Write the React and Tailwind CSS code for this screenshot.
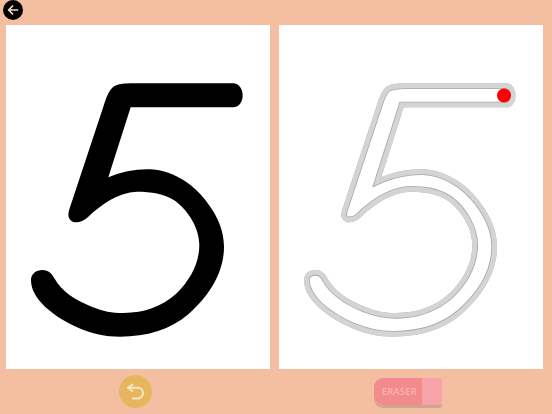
const FIVE = "M640 40 C657 40 668 58 668 76 C668 96 657 112 640 112 L332 112 L265 322 C305 305 345 297 390 298 C450 300 515 335 560 395 C595 440 612 485 612 530 C612 610 565 680 505 733 C450 780 380 800 300 800 C215 800 130 760 75 710 C50 685 33 660 33 630 C33 612 48 600 68 600 C85 600 97 612 103 625 C125 665 165 690 215 710 C250 724 275 729 310 729 C375 729 425 710 470 670 C515 625 538 575 538 525 C538 480 510 425 465 392 C430 370 395 365 350 365 C295 368 245 402 205 440 C190 455 175 458 160 456 C145 450 142 435 148 418 L250 110 C258 85 265 62 280 50 C295 42 310 40 340 40 Z";

function Digit() {
  return (
    <svg viewBox="0 0 264 344" className="block h-full w-full">
      <g transform="translate(14 45) scale(0.33333)">
        <path d={FIVE} fill="#000" />
      </g>
    </svg>
  );
}

function TraceDigit() {
  return (
    <svg viewBox="0 0 264 344" className="block h-full w-full">
      <defs>
        <clipPath id="five-clip">
          <path d={FIVE} />
        </clipPath>
      </defs>
      <g transform="translate(14 45) scale(0.33333)">
        <g clipPath="url(#five-clip)">
          <path d={FIVE} fill="#fff" stroke="#a8a8a8" strokeWidth="34" strokeLinejoin="miter" strokeMiterlimit="10" />
          <path d={FIVE} fill="none" stroke="#d4d4d4" strokeWidth="29" strokeLinejoin="miter" strokeMiterlimit="10" />
        </g>
      </g>
      <circle cx="225" cy="70.500" r="7" fill="#fe0000" />
    </svg>
  );
}

export default function App() {
  return (
    <div className="flex h-[414px] w-[552px] flex-col overflow-hidden bg-[#f4bfa1]">
      <div className="h-[25px] shrink-0 pl-[3px]">
        <button className="flex h-[20px] w-[20px] items-center justify-center rounded-full bg-black">
          <svg viewBox="0 0 16 16" className="h-[14px] w-[14px]" fill="none" stroke="#f6d9c6" strokeWidth="1.8">
            <path d="M14 8H3M8 3 3 8l5 5" />
          </svg>
        </button>
      </div>
      <div className="flex h-[344px] shrink-0 gap-[9px] px-[6px]">
        <div className="h-full w-[264px] bg-white"><Digit /></div>
        <div className="h-full w-[264px] bg-white"><TraceDigit /></div>
      </div>
      <div className="flex flex-1 gap-[9px] px-[6px]">
        <div className="flex w-[264px] items-start justify-center pr-[6px] pt-[6px]">
          <button className="flex h-[33px] w-[33px] items-center justify-center rounded-full bg-[#e8b55f]">
            <svg viewBox="0 0 20 20" className="h-[20px] w-[20px]" fill="none" stroke="#f3e6c5" strokeWidth="2">
              <path d="M8 2 3.200 5.800 8 9.500" />
              <path d="M3.500 5.800H13c3 0 5 2.400 5 5.200s-2 5.500-5 5.500H7" />
            </svg>
          </button>
        </div>
        <div className="flex w-[264px] items-start justify-center pr-[6px] pt-[9px]">
          <div className="flex h-[27px] w-[68px] overflow-hidden rounded-l-[9px] rounded-r-[3px] shadow-[0_3px_0_#cfa790]">
            <div className="flex w-[48px] items-center justify-center bg-[#f38b8d] pl-[3px] font-['Lato','Liberation_Sans',sans-serif] text-[9px] tracking-[0.4px] text-[#fbbcb9]">ERASER</div>
            <div className="flex-1 bg-[#f7a3a9]" />
          </div>
        </div>
      </div>
    </div>
  );
}
